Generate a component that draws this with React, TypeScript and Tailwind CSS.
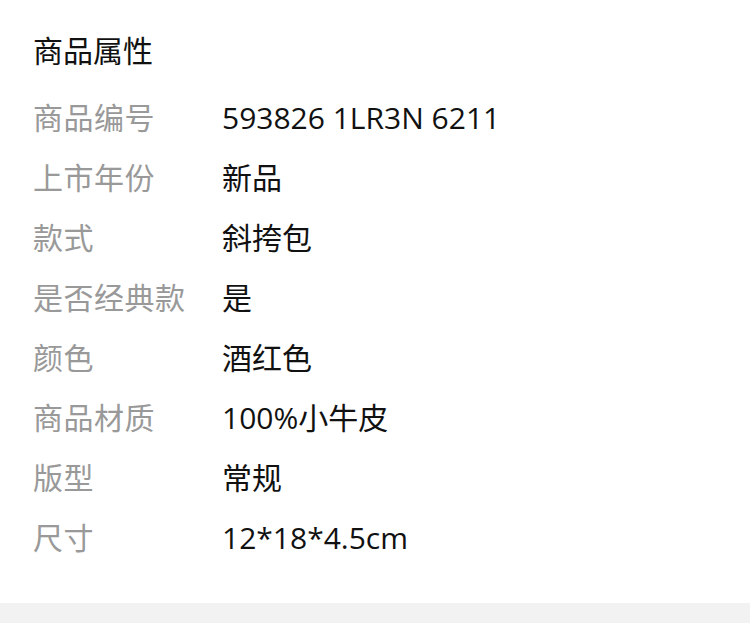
import React from "react";

const rows: [string, string][] = [
  ["商品编号", "593826 1LR3N 6211"],
  ["上市年份", "新品"],
  ["款式", "斜挎包"],
  ["是否经典款", "是"],
  ["颜色", "酒红色"],
  ["商品材质", "100%小牛皮"],
  ["版型", "常规"],
  ["尺寸", "12*18*4.5cm"],
];

export default function App() {
  return (
    <div className="w-[750px] h-[634px] bg-white flex flex-col" style={{ fontFamily: '"Open Sans", "Noto Sans CJK SC", sans-serif' }}>
      <div className="flex-1 pl-[33px] pt-[31px]">
        <div className="text-[30px] leading-[40px] text-[#111] h-[40px]">商品属性</div>
        <div className="mt-[27px] flex flex-col">
          {rows.map(([k, v]) => (
            <div key={k} className="flex h-[60px] items-start">
              <div className="w-[189px] text-[30px] leading-[40px] text-[#999] tracking-[0.5px]">{k}</div>
              <div className="text-[30px] leading-[40px] text-[#111]">{v}</div>
            </div>
          ))}
        </div>
      </div>
      <div className="h-[20px] bg-[#f2f2f2] mb-[11px]" />
    </div>
  );
}
